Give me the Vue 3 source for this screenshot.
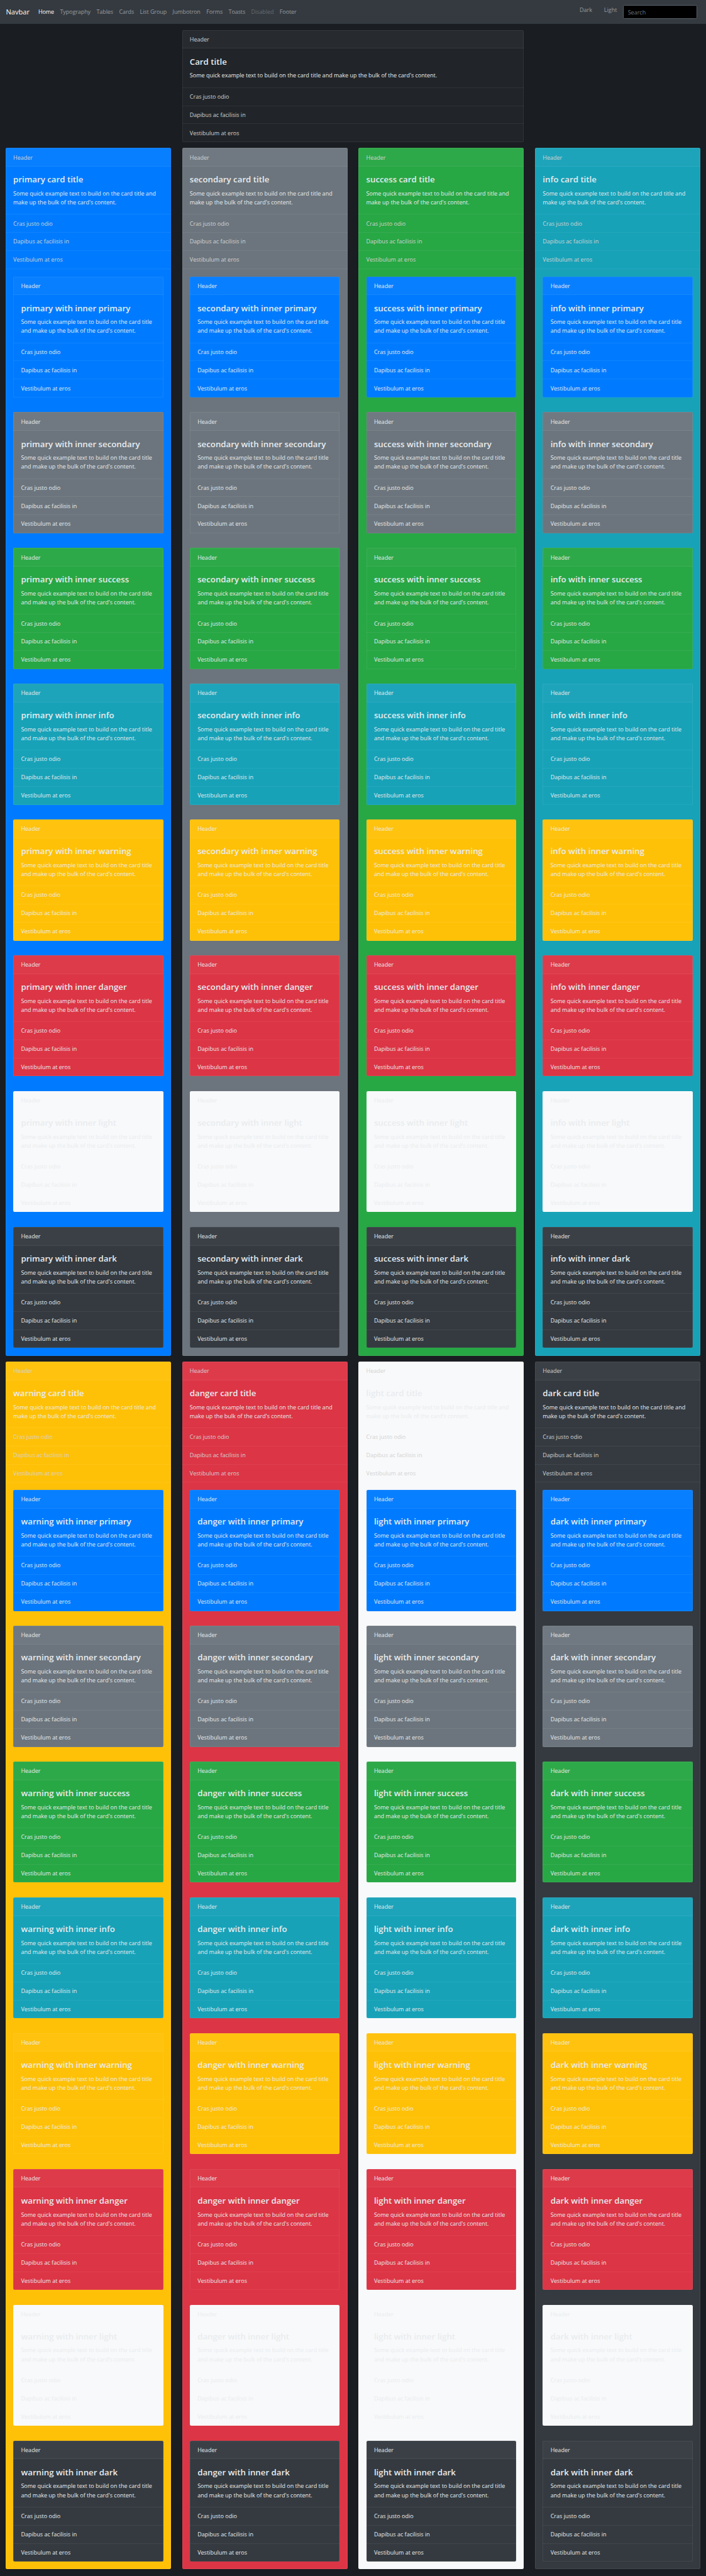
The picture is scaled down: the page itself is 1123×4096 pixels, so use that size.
<script setup>
const links = ['Home', 'Typography', 'Tables', 'Cards', 'List Group', 'Jumbotron', 'Forms', 'Toasts', 'Disabled', 'Footer']
const themes = ['primary', 'secondary', 'success', 'info', 'warning', 'danger', 'light', 'dark']
const items = ['Cras justo odio', 'Dapibus ac facilisis in', 'Vestibulum at eros']
const text = "Some quick example text to build on the card title and make up the bulk of the card's content."
</script>

<template>
  <div class="page">
    <nav class="navbar">
      <a class="brand">Navbar</a>
      <ul class="links">
        <li v-for="link in links" :key="link" :class="{ active: link === 'Home', disabled: link === 'Disabled' }">{{ link }}</li>
      </ul>
      <div class="modes">
        <span>Dark</span>
        <span>Light</span>
      </div>
      <input class="search" type="text" placeholder="Search" />
    </nav>

    <main class="grid">
      <section class="card outer intro">
        <header class="card-header">Header</header>
        <div class="card-body">
          <h4>Card title</h4>
          <p>{{ text }}</p>
        </div>
        <ul class="list">
          <li v-for="item in items" :key="item">{{ item }}</li>
        </ul>
      </section>

      <section v-for="theme in themes" :key="theme" class="card outer" :class="theme">
        <header class="card-header">Header</header>
        <div class="card-body">
          <h4>{{ theme }} card title</h4>
          <p>{{ text }}</p>
        </div>
        <ul class="list closed">
          <li v-for="item in items" :key="item">{{ item }}</li>
        </ul>
        <div class="nested">
          <article v-for="inner in themes" :key="inner" class="card" :class="inner">
            <header class="card-header">Header</header>
            <div class="card-body">
              <h4>{{ theme }} with inner {{ inner }}</h4>
              <p>{{ text }}</p>
            </div>
            <ul class="list">
              <li v-for="item in items" :key="item">{{ item }}</li>
            </ul>
          </article>
        </div>
      </section>
    </main>
  </div>
</template>

<style>
html {
  font-size: calc(100vw / 118.9375);
}
body {
  margin: 0;
  background: #1a1d21;
}
</style>

<style scoped>
* {
  box-sizing: border-box;
}
.page {
  --line: 0.0625rem;
  width: 118.9375rem;
  height: 433.8125rem;
  overflow: hidden;
  background: #1a1d21;
  color: #e9ecef;
  font-family: "Open Sans", "Noto Sans", sans-serif;
  font-size: 0.957rem;
  line-height: 1.5rem;
}
ul {
  list-style: none;
  margin: 0;
  padding: 0;
}
h4,
p {
  margin: 0;
}

.navbar {
  display: flex;
  align-items: flex-start;
  height: 4.0625rem;
  padding: 0 1.5rem 0 1rem;
  background: #343a40;
  color: #999c9f;
}
.brand {
  width: 5.45rem;
  padding-top: 1.25rem;
  font-size: 1.178rem;
  color: #fff;
}
.links {
  display: flex;
  gap: 1rem;
  padding-top: 1.25rem;
  letter-spacing: -0.011em;
}
.links .active {
  color: #fff;
}
.links .disabled {
  color: #676b70;
}
.modes {
  display: flex;
  gap: 2rem;
  margin-left: auto;
  padding: 1rem 1rem 0 0;
}
.search {
  width: 12.5rem;
  height: 2.375rem;
  margin: 0.8125rem 0 0;
  padding: 0.1rem 0.72rem 0;
  border: 0.0625rem solid #59616a;
  border-radius: 0.25rem;
  background: #000;
  color: #e9ecef;
  font: inherit;
}
.search::placeholder {
  color: #6c757d;
  opacity: 1;
}

.grid {
  display: grid;
  grid-template-columns: repeat(4, 1fr);
  gap: 1rem 1.875rem;
  padding: 1rem 0.9375rem;
}
.card {
  border-radius: 0.25rem;
  background: #212529;
  box-shadow: inset 0 0 0 var(--line) rgba(255, 255, 255, 0.125);
  padding-bottom: 0.0625rem;
}
.intro {
  grid-column: 2 / span 2;
  height: 18.875rem;
}
.intro + .card {
  grid-column: 1;
}
.card-header {
  height: 3.125rem;
  padding: 0.86rem 1.29rem 0;
  border-radius: 0.25rem 0.25rem 0 0;
  background: rgba(255, 255, 255, 0.03);
  box-shadow: inset 0 calc(var(--line) * -1) 0 rgba(255, 255, 255, 0.125);
}
.card-body {
  height: 8rem;
  padding: 1.33rem 1.29rem 0;
}
.intro .card-body {
  height: 6.5rem;
}
.card-body h4 {
  height: 2.5rem;
  font-size: 1.404rem;
  font-weight: 600;
  line-height: 1.8rem;
  white-space: nowrap;
}
.list li {
  height: 3.0625rem;
  padding: 0.86rem 1.29rem 0;
  box-shadow: inset 0 var(--line) 0 rgba(255, 255, 255, 0.125);
}
.list.closed {
  padding-bottom: 0.0625rem;
  box-shadow: inset 0 calc(var(--line) * -1) 0 rgba(255, 255, 255, 0.125);
}
.outer > .card-header,
.outer > .list {
  color: #d3d3d3;
}
.nested {
  display: flex;
  flex-direction: column;
  gap: 2.5rem;
  padding: 1.25rem 1.3125rem;
}

.primary { background: #007bff; }
.secondary { background: #6c757d; }
.success { background: #28a745; }
.info { background: #17a2b8; }
.warning { background: #ffc107; }
.danger { background: #dc3545; }
.light { background: #f8f9fa; }
.dark { background: #343a40; }

.nested .card-header,
.nested .list {
  color: #e9ecef;
}
</style>
